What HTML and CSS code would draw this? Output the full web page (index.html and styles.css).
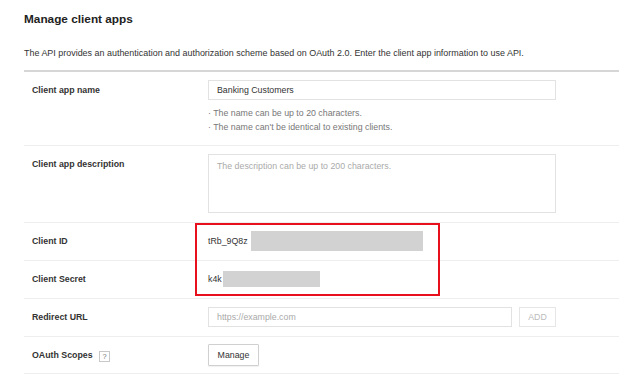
FILE: index.html
```html
<!DOCTYPE html>
<html lang="en">
<head>
  <meta charset="UTF-8" />
  <meta name="viewport" content="width=device-width, initial-scale=1" />
  <title>Manage client apps</title>
  <link rel="stylesheet" href="styles.css">
</head>
<body>
  <div class="page">
    <h2 class="page-title">Manage client apps</h2>
    <p class="page-desc">The API provides an authentication and authorization scheme based on OAuth 2.0. Enter the client app information to use API.</p>

    <div class="app-form">
      <div class="form-row">
        <div class="form-label">Client app name</div>
        <div class="form-value">
          <input class="text-input" type="text" value="Banking Customers">
          <ul class="hints">
            <li>The name can be up to 20 characters.</li>
            <li>The name can't be identical to existing clients.</li>
          </ul>
        </div>
      </div>

      <div class="form-row">
        <div class="form-label">Client app description</div>
        <div class="form-value">
          <textarea class="text-area" placeholder="The description can be up to 200 characters."></textarea>
        </div>
      </div>

      <div class="form-row">
        <div class="form-label">Client ID</div>
        <div class="form-value secret-value">
          <span>tRb_9Q8z</span><span class="masked masked-id"></span>
        </div>
      </div>

      <div class="form-row">
        <div class="form-label">Client Secret</div>
        <div class="form-value secret-value">
          <span>k4k</span><span class="masked masked-secret"></span>
        </div>
      </div>

      <div class="form-row">
        <div class="form-label">Redirect URL</div>
        <div class="form-value url-value">
          <input class="text-input url-input" type="text" placeholder="https://example.com">
          <button class="add-button" disabled>ADD</button>
        </div>
      </div>

      <div class="form-row scopes-row">
        <div class="form-label">OAuth Scopes <span class="help-badge">?</span></div>
        <div class="form-value">
          <button class="manage-button">Manage</button>
        </div>
      </div>

      <div class="highlight-box"></div>
    </div>
  </div>
</body>
</html>
```

FILE: styles.css
```css
body {
  margin: 0;
  font-family: "Liberation Sans", Arial, sans-serif;
  font-size: 8.8px;
  color: #333;
  background-color: #fff;
}
.page {
  padding: 0 5px 0 24px;
}
.page-title {
  margin: 0;
  padding-top: 11px;
  font-size: 11.8px;
  line-height: 16px;
  color: #222;
}
.page-desc {
  margin: 0;
  padding-top: 18px;
  font-size: 8.95px;
  line-height: 16px;
  color: #333;
}
.app-form {
  position: relative;
  margin-top: 9px;
  border-top: 2px solid #d6d6d6;
}
.form-row {
  display: grid;
  grid-template-columns: 184px 1fr;
  padding: 8px 0 9px;
  border-bottom: 1px solid #eee;
}
.scopes-row {
  padding: 7px 0;
}
.form-label {
  padding-left: 8px;
  font-weight: bold;
  line-height: 20px;
  color: #333;
}
.scopes-row .form-label {
  line-height: 22px;
}
.form-value {
  min-height: 20px;
}
.text-input,
.text-area {
  box-sizing: border-box;
  display: block;
  width: 348px;
  height: 20px;
  margin: 0;
  padding: 0 8px;
  border: 1px solid #e2e2e2;
  font-family: inherit;
  font-size: 8.8px;
  color: #333;
  background: #fff;
  outline: none;
}
.text-area {
  height: 59px;
  padding: 5px 8px;
  resize: none;
  line-height: 12px;
}
.text-input::placeholder,
.text-area::placeholder {
  color: #aaa;
}
.hints {
  list-style: none;
  margin: 6px 0 2px;
  padding: 0;
  line-height: 14px;
  color: #777;
}
.hints li::before {
  content: "\00B7  ";
  white-space: pre;
}
.secret-value {
  display: flex;
  align-items: center;
  height: 20px;
}
.masked {
  display: inline-block;
  background-color: #d2d2d2;
}
.masked-id {
  width: 172px;
  height: 20px;
  margin-left: 3px;
}
.masked-secret {
  width: 97px;
  height: 16px;
  margin-left: 1px;
}
.url-value {
  display: flex;
  gap: 7px;
}
.url-input {
  width: 304px;
}
.add-button {
  width: 37px;
  height: 20px;
  padding: 0;
  border: 1px solid #e6e6e6;
  background: #fff;
  font-family: inherit;
  font-size: 8.8px;
  color: #bbb;
}
.manage-button {
  width: 51px;
  height: 22px;
  padding: 0;
  border: 1px solid #d0d0d0;
  border-radius: 1px;
  background: #fff;
  box-shadow: 0 1px 1px rgba(0, 0, 0, 0.06);
  font-family: inherit;
  font-size: 8.8px;
  color: #333;
  cursor: pointer;
}
.help-badge {
  display: inline-block;
  box-sizing: border-box;
  width: 11px;
  height: 11px;
  margin-left: 4px;
  border: 1px solid #c8c8c8;
  font-size: 7.5px;
  font-weight: normal;
  line-height: 9px;
  text-align: center;
  color: #777;
  vertical-align: -1px;
}
.highlight-box {
  position: absolute;
  left: 171px;
  top: 151px;
  width: 241px;
  height: 69px;
  border: 2px solid #e8101c;
}
```
